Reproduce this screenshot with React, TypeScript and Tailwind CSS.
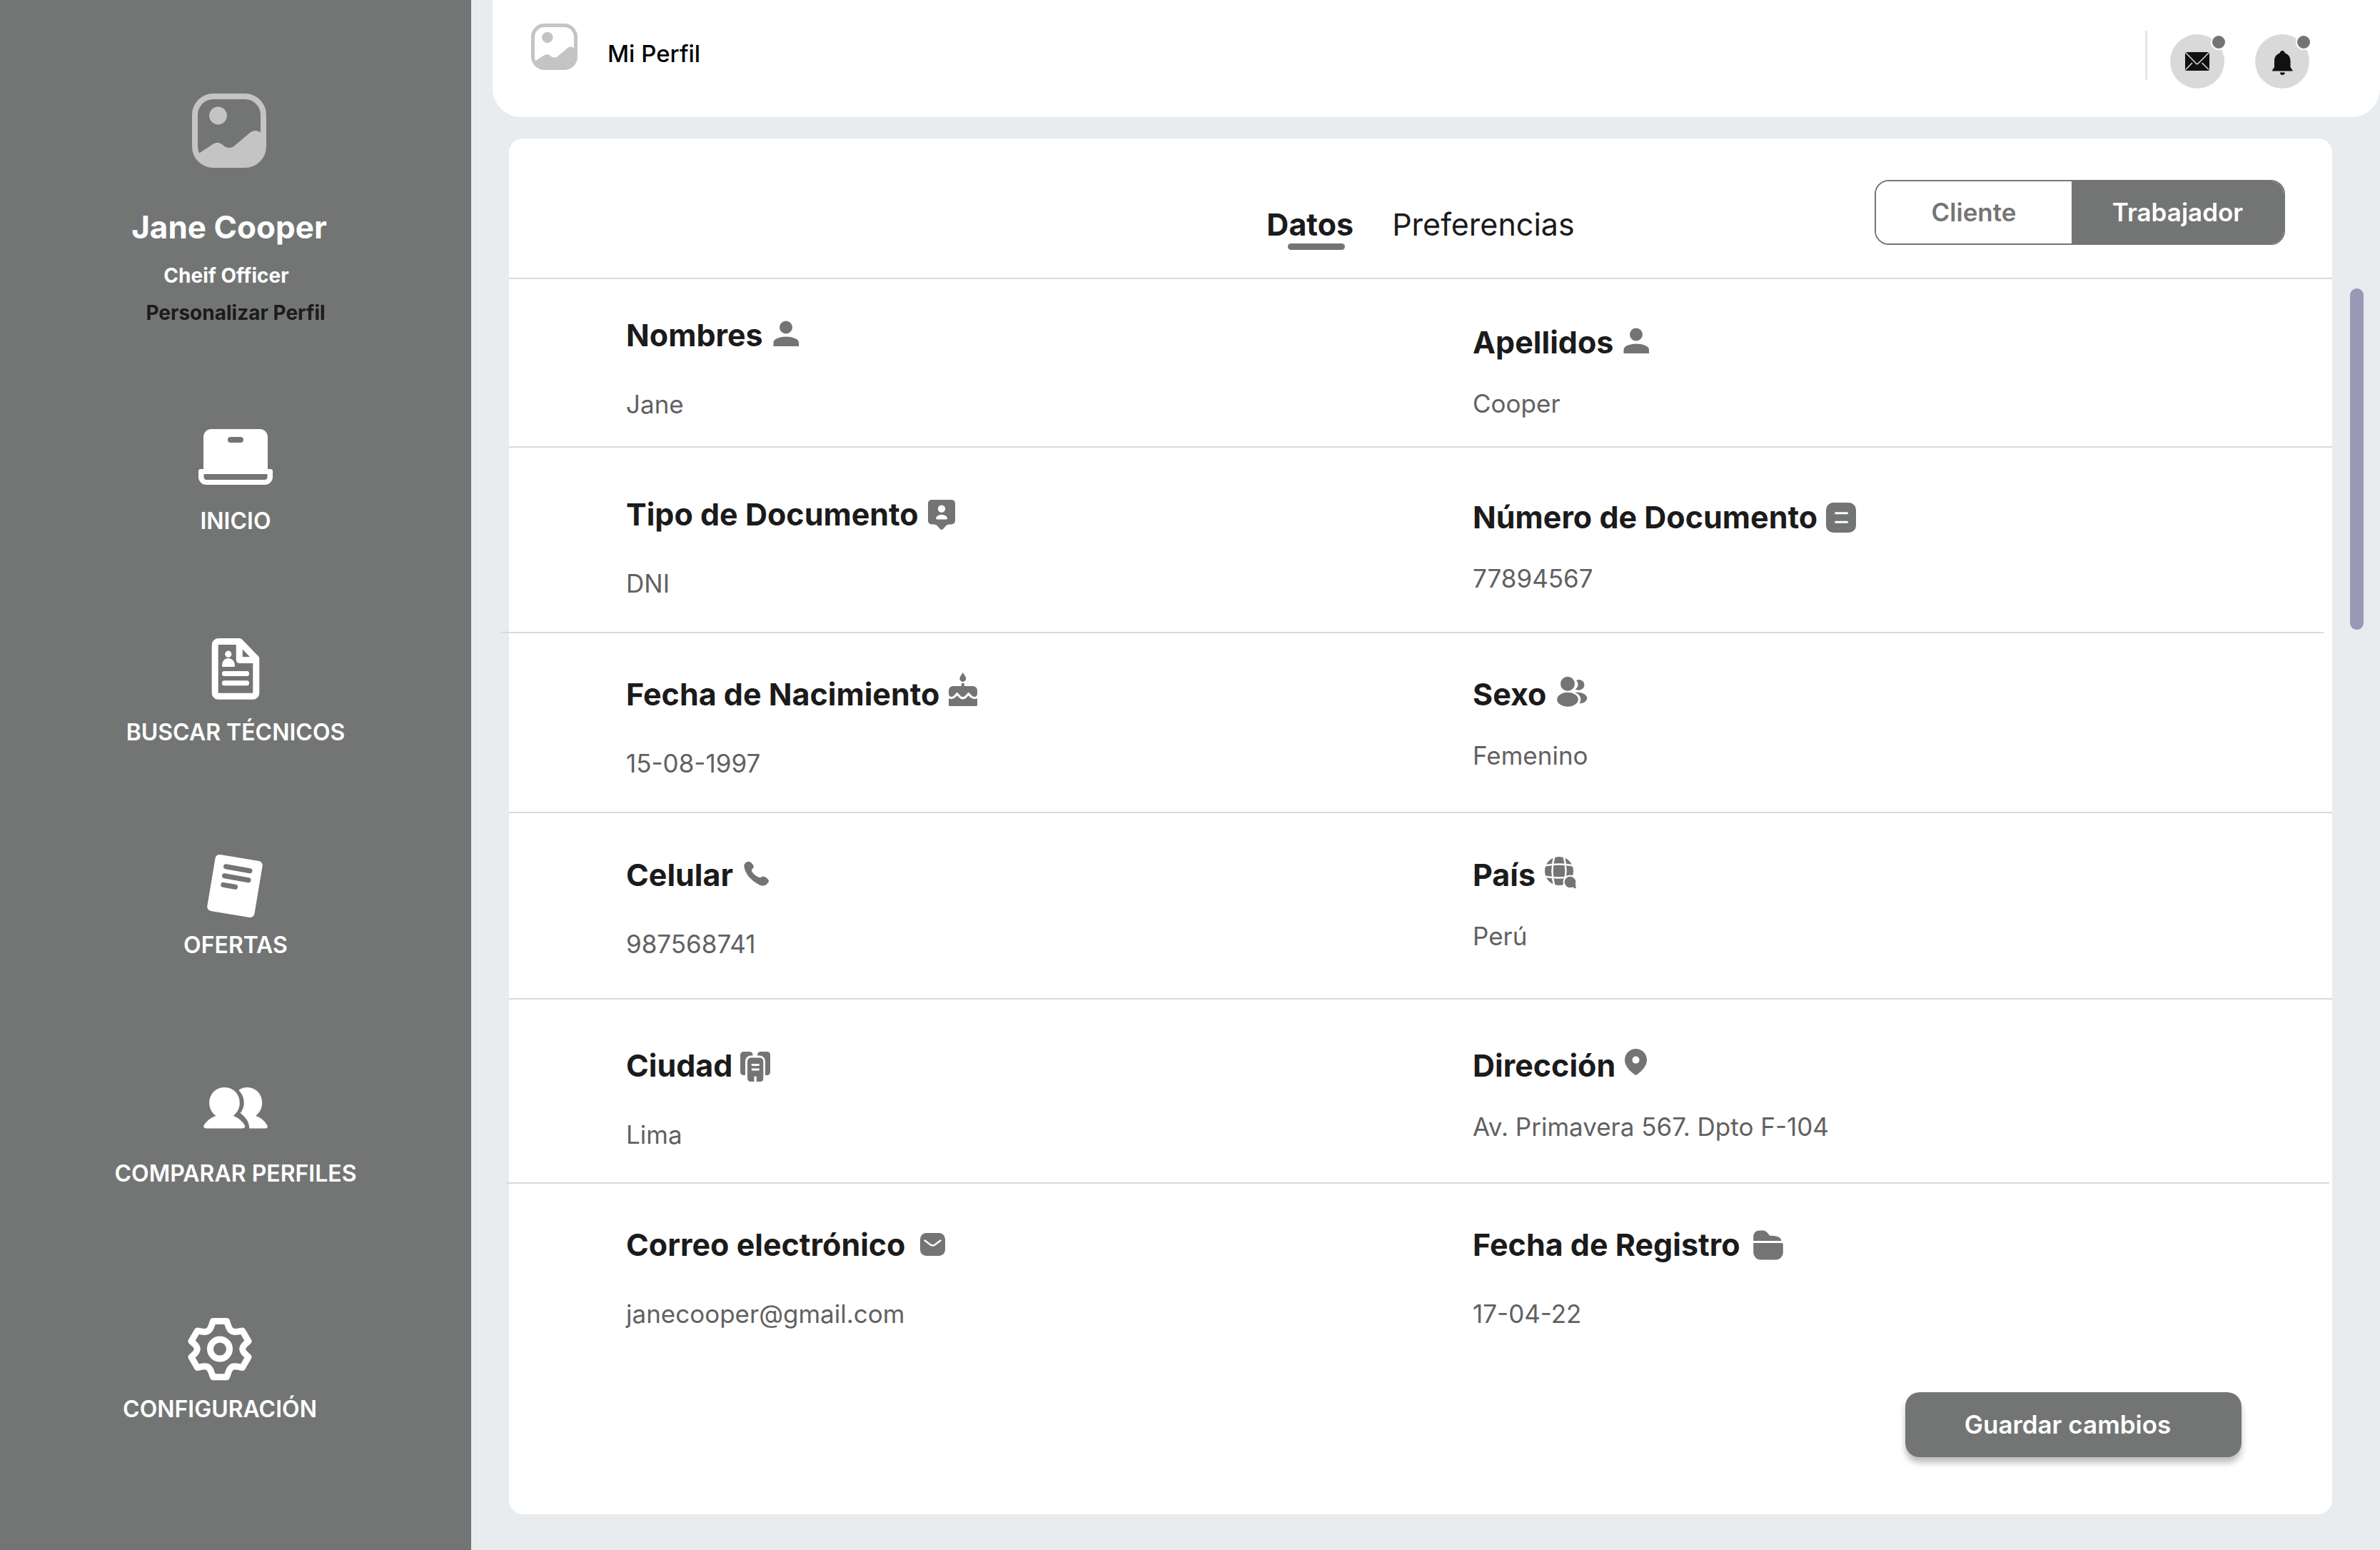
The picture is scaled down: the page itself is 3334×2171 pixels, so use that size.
import React from "react";

type IconProps = { className?: string };

function PictureIcon({ className }: IconProps) {
  return (
    <svg viewBox="0 0 104 104" className={className} fill="#c4c4c4" aria-hidden="true">
      <rect x="4" y="4" width="96" height="96" rx="26" fill="none" stroke="#c4c4c4" strokeWidth="8" />
      <circle cx="36.5" cy="31" r="12.4" />
      <path d="M8.5 84.5L29.5 70.8C33 68.6 38 68.4 41.5 70.8L46 74.3C49.5 76.6 55 76.6 58.8 73.8L81 55C85.5 51.2 91 50.8 96 54.6L101 58V74C101 92 90 102 74 102H30C19 102 12 97 8.5 84.5Z" />
    </svg>
  );
}

function NavSvg({ children }: { children: React.ReactNode }) {
  return (
    <svg viewBox="0 0 104 104" className="size-26" fill="#fff" aria-hidden="true">
      {children}
    </svg>
  );
}

const LaptopIcon = () => (
  <NavSvg>
    <path d="M18 7H86A11 11 0 0 1 97 18V63H101A3 3 0 0 1 104 66V74A11 11 0 0 1 93 85H11A11 11 0 0 1 0 74V66A3 3 0 0 1 3 63H7V18A11 11 0 0 1 18 7Z" />
    <rect x="41" y="18" width="22" height="8" rx="4" fill="#737574" />
    <path d="M7.5 70H96.500V74A4 4 0 0 1 92.500 78H11.500A4 4 0 0 1 7.500 74Z" fill="#737574" />
  </NavSvg>
);

const ResumeIcon = () => (
  <NavSvg>
    <g fill="none" stroke="#fff" strokeWidth="9" strokeLinejoin="round">
      <path d="M28 8.500H57.500L80.800 32.500V80.500A4.500 4.500 0 0 1 76.500 85.300H27.500A4.500 4.500 0 0 1 23.200 80.500V13.500A4.800 4.800 0 0 1 28 8.500Z" />
      <path d="M57.300 8.500V34.600H80.800" />
    </g>
    <ellipse cx="41.800" cy="26.200" rx="4.600" ry="4.600" />
    <path d="M33 42.500C33 36 37 32 41.800 32S51 36 51 42.500Q51 44 49.500 44H34.500Q33 44 33 42.500Z" />
    <rect x="33" y="50" width="38" height="7" rx="3" />
    <rect x="33" y="63.300" width="38" height="7" rx="3" />
  </NavSvg>
);

const OffersIcon = () => (
  <NavSvg>
    <rect x="17.500" y="13" width="67" height="80" rx="6" transform="rotate(9.500 51 53)" />
    <g stroke="#737574" strokeWidth="7" strokeLinecap="round">
      <path d="M38.500 25.700L72 31.700" />
      <path d="M36.500 38.700L70 44.700" />
      <path d="M34.800 51.400L51.500 54.300" />
    </g>
  </NavSvg>
);

const CompareIcon = () => (
  <NavSvg>
    <path d="M24.500 54.800C18.500 51 15.200 44 15.200 36.800C15.200 24 24.500 15 36.500 15S57.800 24 57.800 36.800C57.800 44 54.500 51 48.500 54.800C56 57.500 62 63 65 68.500C66 70.800 64.500 72.400 62 72.400H10.500C8 72.400 6.500 70.800 7.500 68.500C10.500 63 17 57.500 24.500 54.800Z" />
    <path d="M57 18.500C60 16 64 15 68 15C80 15 89.200 24 89.200 36.800C89.200 44 86 51 80 54.800C88 57.500 93.500 63 96.500 68.500C97.500 70.800 96 72.400 94 72.400H71.300C71.300 64 66.500 57 58.600 51C65.500 43 65.500 30 58.500 21.500C57 20 56.500 19.200 57 18.500Z" />
  </NavSvg>
);

const GearIcon = () => (
  <NavSvg>
    <g fill="none" stroke="#fff" strokeWidth="9" strokeLinejoin="round">
      <path d="M42.500 12.500H61.500C64 19 65 27.500 73 27.500C77 27.500 80 26.500 83.500 26L92 40.500C89 44 83.700 46.500 83.700 51.600C83.700 56.800 89 59.300 92 62.800L83.500 77.400C80 76.800 77 75.800 73 75.800C65 75.800 64 84.300 61.500 90.700H42.500C40 84.300 39 75.800 31 75.800C27 75.800 24 76.800 20.500 77.400L12 62.800C15 59.300 20.300 56.800 20.300 51.600C20.300 46.500 15 44 12 40.500L20.500 26C24 26.500 27 27.500 31 27.500C39 27.500 40 19 42.500 12.500Z" />
      <circle cx="52" cy="51.600" r="13.500" />
    </g>
  </NavSvg>
);

function FieldSvg({ children }: { children: React.ReactNode }) {
  return (
    <svg viewBox="0 0 48 48" className="size-12 shrink-0 overflow-visible" fill="#737574" aria-hidden="true">
      {children}
    </svg>
  );
}

const PersonIcon = () => (
  <FieldSvg>
    <circle cx="24" cy="13.500" r="9" />
    <path d="M6.500 40V34.500C6.500 29.500 16 26.500 24.200 26.500S42 29.500 42 34.500V40Z" />
  </FieldSvg>
);

const BadgeIcon = () => (
  <FieldSvg>
    <path d="M10 4H38A5 5 0 0 1 43 9V33.500A5 5 0 0 1 38 38.500H34Q32 38.500 30.500 40L26 45Q24 46.800 22 45L17.500 40Q16 38.500 14 38.500H10A5 5 0 0 1 5 33.500V9A5 5 0 0 1 10 4Z" />
    <circle cx="24" cy="16.600" r="5.200" fill="#fff" />
    <path d="M16.300 30C16.300 26.500 20.500 25 24 25S32 26.500 32 30Q32 31.500 30.500 31.500H17.800Q16.300 31.500 16.300 30Z" fill="#fff" />
  </FieldSvg>
);

const DocNumberIcon = () => (
  <FieldSvg>
    <rect x="4" y="4" width="42" height="42" rx="10" />
    <path d="M17.500 18.800H33.500M17.500 31.200H33.500" stroke="#fff" strokeWidth="3" strokeLinecap="round" />
  </FieldSvg>
);

const CakeIcon = () => (
  <FieldSvg>
    <path d="M24.800 -6C27 -2.500 29.200 -0.500 29.200 2.500A4.400 4.400 0 0 1 20.400 2.500C20.400 -0.500 22.500 -2.500 24.800 -6Z" />
    <rect x="22.800" y="9" width="4" height="6" />
    <path d="M11 13H39A6 6 0 0 1 45 19V23.500C45 26.500 43 28 41.200 28C39 28 38 27 36.500 25.500L32.700 21.500L28.500 26C26 28.700 23.300 28.700 21 26L16.700 21.500L13 25.500C11.500 27 10.500 28 9 28C7 28 5 26.500 5 23.500V19A6 6 0 0 1 11 13Z" />
    <path d="M5 30.300C8.500 31.600 12 31 14.500 28.500L16.700 26.200L20 29.500C22.700 32 26.800 32 29.500 29.500L32.700 26.200L35 28.500C38 31 41.500 31.600 45 30.300V39.500Q45 41 43.500 41H6.500Q5 41 5 39.500Z" />
  </FieldSvg>
);

const PeopleIcon = () => (
  <FieldSvg>
    <circle cx="22" cy="9.800" r="10" />
    <ellipse cx="22" cy="31.800" rx="14.800" ry="10" />
    <path d="M34.200 5C39 2.500 45.400 5.500 45.400 11.500S38 20.300 32.500 17.600C37.500 14 37.800 9 34.200 5Z" />
    <path d="M32.300 22C41 21 49.200 24.500 49.200 29.800C49.200 34.500 43.500 37.500 38.500 37.200C42 32 41 25.500 32.300 22Z" />
  </FieldSvg>
);

const PhoneIcon = () => (
  <FieldSvg>
    <path d="M7.300 12C7.300 8 11 5.700 14 5.700C16.500 5.700 18 8 20 10.500C21.500 13 20.500 14.500 19 16C17.500 17.500 17.500 18.500 18.500 20C21 24 25 26.500 28.500 28C30.500 28.700 32 27.200 34 26.600C36 26.200 40 29.500 41.500 31.500C43 33.500 40.500 36 39 37.500C36 40.300 32 40 28 38C17 32 8.500 23 7.300 12Z" />
  </FieldSvg>
);

const GlobeIcon = () => (
  <FieldSvg>
    <circle cx="25" cy="19" r="20" />
    <g fill="none" stroke="#fff" strokeWidth="2.500">
      <path d="M18.500 -2Q12.500 19 18.500 40M31.500 -2Q37.500 19 31.500 40" />
      <path d="M4 11.500Q25 7.500 46 11.500M4 26.500Q25 30.500 46 26.500" />
    </g>
    <circle cx="40.500" cy="34.500" r="10" fill="#fff" />
    <circle cx="40.500" cy="34.500" r="7.800" />
    <path d="M45 37L48.300 38.500L47.500 40.500L48.500 42.500L46.500 42.800L44 40.500Z" strokeLinejoin="round" stroke="#737574" strokeWidth="1" />
  </FieldSvg>
);

const CityIcon = () => (
  <FieldSvg>
    <path d="M8 5H16A4.500 4.500 0 0 1 20.500 9.500V38H8A5 5 0 0 1 3 33.500V9.500A4.500 4.500 0 0 1 8 5Z" />
    <path d="M31.500 5H40.500A4.500 4.500 0 0 1 45 9.500V33.500A4.500 4.500 0 0 1 40.500 38H27V9.500A4.500 4.500 0 0 1 31.500 5Z" />
    <rect x="10" y="10.500" width="28" height="39" rx="8" fill="#fff" />
    <path d="M18 13.500H30A5 5 0 0 1 35.300 18.500V42.500A4.500 4.500 0 0 1 31 47H25.800V40.500Q25.800 39.500 24.800 39.500H23.400Q22.400 39.500 22.400 40.500V47H17.500A4.500 4.500 0 0 1 13 42.500V18.500A5 5 0 0 1 18 13.500Z" />
    <path d="M20 23.500H28.500M20 30H28.500" stroke="#fff" strokeWidth="2.800" strokeLinecap="round" />
  </FieldSvg>
);

const PinIcon = () => (
  <FieldSvg>
    <path d="M20.500 1C12 1 5 7.800 5 16.500C5 26 13.500 33 18.500 37Q20.500 38.600 22.500 37C27.500 33 36 26 36 16.500C36 7.800 29 1 20.500 1Z" />
    <circle cx="20.500" cy="16.600" r="5" fill="#fff" />
  </FieldSvg>
);

const MailIcon = () => (
  <FieldSvg>
    <rect x="12" y="8" width="35" height="32" rx="8.500" />
    <path d="M18.500 18.500L26.500 24.500Q29.500 26.500 32.500 24.500L40.500 18.500" fill="none" stroke="#fff" strokeWidth="2.500" strokeLinecap="round" />
  </FieldSvg>
);

const FolderIcon = () => (
  <FieldSvg>
    <path d="M10.200 18.900V13C10.200 8 14 4.600 19 4.600H23C28 4.600 28.500 6.500 33.300 11.700C42 11.700 48.500 13 49.500 18.900Z" />
    <path d="M10.200 21.900H50Q51.800 21.900 51.800 23.700V35.500A10 10 0 0 1 41.800 45.500H20.200A10 10 0 0 1 10.200 35.500Z" />
  </FieldSvg>
);

const EnvelopeIcon = () => (
  <svg viewBox="0 0 76 76" className="size-19" aria-hidden="true">
    <rect x="21" y="25" width="34" height="26" rx="2" fill="#111" />
    <g fill="none" stroke="#d9d9d9" strokeWidth="1.600" strokeLinecap="round">
      <path d="M22 26L36.500 41Q37.800 42.300 39.200 41L54 26" />
      <path d="M22.500 48.800L30.500 40.500M53.500 48.800L45 40.500" />
    </g>
  </svg>
);

const BellIcon = () => (
  <svg viewBox="0 0 76 76" className="size-19" fill="#111" aria-hidden="true">
    <path d="M38.300 23C40.300 23 41.500 24.500 41.700 26.200C46.500 27.800 49.500 32 49.500 37V45.500C49.500 47.500 52.600 49 52.600 51.500H24C24 49 27 47.500 27 45.500V37C27 32 30 27.800 34.800 26.200C35 24.500 36.300 23 38.300 23Z" />
    <path d="M35 53.500H41.700Q41.500 57 38.300 57T35 53.500Z" />
  </svg>
);

const navItems = [
  { label: "INICIO", icon: <LaptopIcon />, cls: "mt-34" },
  { label: "BUSCAR TÉCNICOS", icon: <ResumeIcon />, cls: "mt-34" },
  { label: "OFERTAS", icon: <OffersIcon />, cls: "mt-[138px]" },
  { label: "COMPARAR PERFILES", icon: <CompareIcon />, cls: "mt-40" },
  { label: "CONFIGURACIÓN", icon: <GearIcon />, cls: "mt-[170px] pr-11" },
];

type Field = { label: string; value: string; icon: React.ReactNode; cls: string };
type Row = { cls: string; line: string; fields: Field[] };

const rows: Row[] = [
  {
    cls: "pt-12 pb-[35px]",
    line: "",
    fields: [
      { label: "Nombres", value: "Jane", icon: <PersonIcon />, cls: "gap-[43px]" },
      { label: "Apellidos", value: "Cooper", icon: <PersonIcon />, cls: "gap-8 pt-[10px]" },
    ],
  },
  {
    cls: "pt-[63px] pb-11",
    line: "",
    fields: [
      { label: "Tipo de Documento", value: "DNI", icon: <BadgeIcon />, cls: "gap-[43px]" },
      { label: "Número de Documento", value: "77894567", icon: <DocNumberIcon />, cls: "gap-8 pt-1" },
    ],
  },
  {
    cls: "pt-[55px] pb-11",
    line: "-ml-3 mr-3",
    fields: [
      { label: "Fecha de Nacimiento", value: "15-08-1997", icon: <CakeIcon />, cls: "gap-[43px]" },
      { label: "Sexo", value: "Femenino", icon: <PeopleIcon />, cls: "gap-8" },
    ],
  },
  {
    cls: "pt-14 pb-[52px]",
    line: "",
    fields: [
      { label: "Celular", value: "987568741", icon: <PhoneIcon />, cls: "gap-[43px]" },
      { label: "País", value: "Perú", icon: <GlobeIcon />, cls: "gap-8" },
    ],
  },
  {
    cls: "pt-[62px] pb-[43px]",
    line: "",
    fields: [
      { label: "Ciudad", value: "Lima", icon: <CityIcon />, cls: "gap-[43px]" },
      { label: "Dirección", value: "Av. Primavera 567. Dpto F-104", icon: <PinIcon />, cls: "gap-8" },
    ],
  },
  {
    cls: "pt-[55px]",
    line: "-ml-1 mr-1",
    fields: [
      { label: "Correo electrónico", value: "janecooper@gmail.com", icon: <MailIcon />, cls: "gap-[43px]" },
      { label: "Fecha de Registro", value: "17-04-22", icon: <FolderIcon />, cls: "gap-[43px]" },
    ],
  },
];

function Sidebar() {
  return (
    <aside className="flex w-[660px] shrink-0 flex-col items-center bg-[#737574] pt-[131px] text-white">
      <div className="flex flex-col items-center pr-[18px]">
        <PictureIcon className="size-26" />
        <h2 className="mt-[53px] text-[44px] leading-[60px] font-bold">Jane Cooper</h2>
        <p className="mt-[18px] pr-2 text-[28px] leading-10 font-bold">Cheif Officer</p>
      </div>
      <a href="#personalizar" className="mt-3 text-[28px] leading-10 font-bold text-[#1b1b1b]">
        Personalizar Perfil
      </a>
      <nav className="flex flex-col items-center">
        {navItems.map((item) => (
          <a key={item.label} href="#" className={`flex flex-col items-center gap-2 ${item.cls}`}>
            {item.icon}
            <span className="text-[32px] leading-12 font-semibold whitespace-nowrap">{item.label}</span>
          </a>
        ))}
      </nav>
    </aside>
  );
}

function RoundButton({ label, children }: { label: string; children: React.ReactNode }) {
  return (
    <button type="button" aria-label={label} className="relative size-19 rounded-full bg-[#d9d9d9]">
      {children}
      <span className="absolute top-0 -right-[3px] size-[22px] rounded-full border-2 border-white bg-[#737574]" />
    </button>
  );
}

function TopBar() {
  return (
    <header className="ml-[30px] flex h-41 items-start justify-between rounded-b-[40px] bg-white pr-[99px] pl-[54px]">
      <div className="flex items-start gap-[42px] pt-[33px]">
        <PictureIcon className="size-[65px]" />
        <h1 className="pt-[18px] text-[33px] leading-12 font-medium text-black">Mi Perfil</h1>
      </div>
      <div className="flex items-start pt-[43px]">
        <div className="mr-8 h-[69px] w-[3px] bg-[#e4e4ed]" />
        <div className="flex gap-[43px] pt-[5px]">
          <RoundButton label="Mensajes">
            <EnvelopeIcon />
          </RoundButton>
          <RoundButton label="Notificaciones">
            <BellIcon />
          </RoundButton>
        </div>
      </div>
    </header>
  );
}

function CardHeader() {
  return (
    <div className="grid h-[195px] grid-cols-[1fr_auto_1fr] items-start">
      <div role="tablist" className="col-start-2 flex gap-[54px] pt-[90px] text-[43px] leading-[60px] text-[#1b1b1b]">
        <button type="button" role="tab" aria-selected="true" className="relative font-bold">
          Datos
          <span className="absolute right-3 -bottom-[6px] h-[9px] w-20 rounded-full bg-[#737574]" />
        </button>
        <button type="button" role="tab" aria-selected="false">
          Preferencias
        </button>
      </div>
      <div className="mt-[58px] mr-[66px] flex h-[91px] w-[575px] justify-self-end overflow-hidden rounded-[20px] border-2 border-[#737574] text-[35px] font-semibold">
        <button type="button" aria-pressed="false" className="w-[274px] bg-white text-[#737574]">
          Cliente
        </button>
        <button type="button" aria-pressed="true" className="flex-1 bg-[#737574] text-white">
          Trabajador
        </button>
      </div>
    </div>
  );
}

function ProfileCard() {
  return (
    <section className="flex min-w-0 flex-1 flex-col rounded-[20px] bg-white pb-20">
      <CardHeader />
      {rows.map((row) => (
        <React.Fragment key={row.fields[0].label}>
          <hr className={`border-t-2 border-[#d9d9d9] ${row.line}`} />
          <dl className={`grid grid-cols-2 pr-[18px] pl-41 ${row.cls}`}>
            {row.fields.map((f) => (
              <div key={f.label} className={`flex flex-col ${f.cls}`}>
                <dt className="flex items-center gap-2 text-[43px] leading-[60px] font-bold text-[#1b1b1b]">
                  {f.label}
                  {f.icon}
                </dt>
                <dd className="text-[35px] leading-12 text-[#616161]">{f.value}</dd>
              </div>
            ))}
          </dl>
        </React.Fragment>
      ))}
      <button
        type="button"
        className="mt-[86px] mr-[127px] h-[91px] w-[471px] self-end rounded-[20px] bg-[#737574] pr-4 text-[35px] font-semibold text-white shadow-[0_8px_8px_rgba(0,0,0,0.25)]"
      >
        Guardar cambios
      </button>
    </section>
  );
}

export default function App() {
  return (
    <div className="flex min-h-screen bg-[#e8ecef] font-['Inter',sans-serif]">
      <Sidebar />
      <main className="flex min-w-0 flex-1 flex-col">
        <TopBar />
        <div className="flex flex-1 pt-[30px] pb-[50px] pl-[53px]">
          <ProfileCard />
          <div className="mt-[210px] mr-[23px] ml-[25px] h-[478px] w-[19px] rounded-full bg-[#9999b5]" />
        </div>
      </main>
    </div>
  );
}
